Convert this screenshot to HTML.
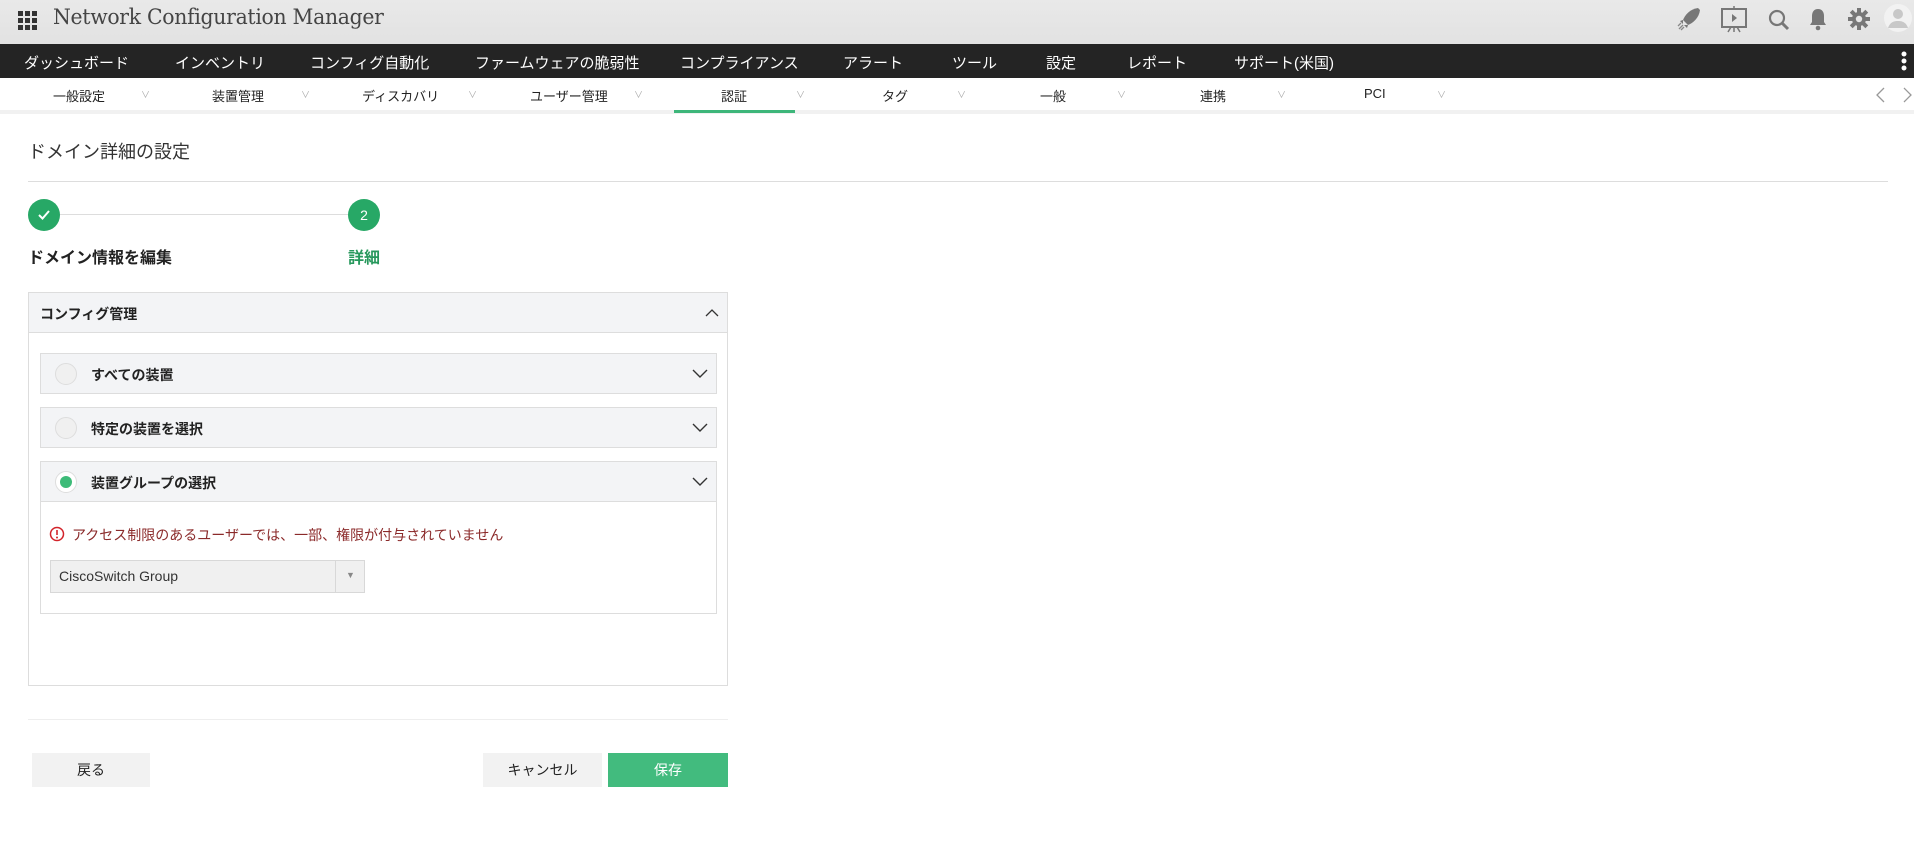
<!DOCTYPE html>
<html><head><meta charset="utf-8"><style>
*{margin:0;padding:0;box-sizing:border-box}
body{width:1914px;height:852px;overflow:hidden;background:#fff;font-family:"Liberation Sans","Noto Sans CJK JP",sans-serif;color:#222;position:relative}
.abs{position:absolute}
#top{left:0;top:0;width:1914px;height:44px;background:linear-gradient(#e9e9e9,#e2e2e2)}
#nav{left:0;top:44px;width:1914px;height:34px;background:#242424;color:#fff;font-size:15px}
#nav span{position:absolute;top:8px;white-space:nowrap}
#sub{left:0;top:78px;width:1914px;height:36px;background:#fff;border-bottom:4px solid #f1f1f1;font-size:13px}
#sub span{position:absolute;top:8px;white-space:nowrap}
#sub i{position:absolute;top:10px;font-style:normal;color:#aaa;font-size:9px}
.circ{width:32px;height:32px;border-radius:50%;background:#27a866;color:#fff;text-align:center;line-height:32px;font-size:14px}
.item{left:40px;width:677px;height:41px;background:#f3f4f6;border:1px solid #ddd;font-size:14px;font-weight:bold}
.item .r{position:absolute;left:14px;top:9px;width:22px;height:22px;border-radius:50%;border:1px solid #ddd;background:#f0f0f0}
.item .t{position:absolute;left:50px;top:11px}
.item svg{position:absolute;right:8px;top:15px}
.btn{top:753px;height:34px;text-align:center;line-height:34px;font-size:14px}
</style></head><body>
<div id="top" class="abs">
<svg class="abs" style="left:18px;top:11px" width="19" height="19"><g fill="#333"><rect x="0" y="0" width="5" height="5"/><rect x="7" y="0" width="5" height="5"/><rect x="14" y="0" width="5" height="5"/><rect x="0" y="7" width="5" height="5"/><rect x="7" y="7" width="5" height="5"/><rect x="14" y="7" width="5" height="5"/><rect x="0" y="14" width="5" height="5"/><rect x="7" y="14" width="5" height="5"/><rect x="14" y="14" width="5" height="5"/></g></svg>
<div class="abs" style="left:53px;top:5px;font-family:'DejaVu Serif','Liberation Serif',serif;font-size:21px;color:#444;letter-spacing:-0.3px;transform:scaleX(0.97);transform-origin:left">Network Configuration Manager</div>
<svg class="abs" style="left:1676px;top:6px" width="26" height="26" viewBox="0 0 26 26"><path d="M22 2 C14 3 9 9 7 14 L12 19 C17 17 23 12 24 4Z" fill="#777"/><path d="M7 14l-3 1 3 3M12 19l-1 3-3-3" fill="#777"/><path d="M3 23l4-4M5 24l3-3M2 20l3-3" stroke="#888" stroke-width="1.3"/></svg>
<svg class="abs" style="left:1720px;top:6px" width="28" height="28" viewBox="0 0 28 28"><rect x="2" y="3" width="24" height="18" fill="none" stroke="#777" stroke-width="2"/><path d="M14 0v3M11 21l-3 5M17 21l3 5M14 21v5" stroke="#777" stroke-width="1.5"/><path d="M12 8l5 4-5 4z" fill="#777"/></svg>
<svg class="abs" style="left:1767px;top:8px" width="24" height="24" viewBox="0 0 24 24"><circle cx="10" cy="10" r="7" fill="none" stroke="#777" stroke-width="2.2"/><path d="M15 15l6 6" stroke="#777" stroke-width="3"/></svg>
<svg class="abs" style="left:1808px;top:7px" width="20" height="24" viewBox="0 0 20 24"><path d="M10 2c-4 0-6 3-6 7v6l-2 3h16l-2-3V9c0-4-2-7-6-7z" fill="#777"/><circle cx="10" cy="21" r="2.3" fill="#777"/></svg>
<svg class="abs" style="left:1847px;top:7px" width="24" height="24" viewBox="0 0 24 24"><g stroke="#777" stroke-width="4"><path d="M12 1v22M1 12h22M4.2 4.2l15.6 15.6M19.8 4.2L4.2 19.8"/></g><circle cx="12" cy="12" r="7" fill="#777"/><circle cx="12" cy="12" r="3.2" fill="#e6e6e6"/></svg>
<svg class="abs" style="left:1883px;top:3px" width="31" height="31" viewBox="0 0 31 31"><circle cx="15" cy="15" r="14" fill="#f2f2f2"/><circle cx="15" cy="11" r="5" fill="#c8c8c8"/><path d="M5 25c2-6 6-7 10-7s8 1 10 7z" fill="#c8c8c8"/></svg>
</div>
<div id="nav" class="abs">
<span style="left:24px">ダッシュボード</span><span style="left:175px">インベントリ</span><span style="left:310px">コンフィグ自動化</span><span style="left:475px">ファームウェアの脆弱性</span><span style="left:680px">コンプライアンス</span><span style="left:843px">アラート</span><span style="left:952px">ツール</span><span style="left:1046px">設定</span><span style="left:1127px">レポート</span><span style="left:1234px">サポート(米国)</span>
<svg class="abs" style="left:1900px;top:7px" width="8" height="22"><circle cx="4" cy="3" r="2.5" fill="#fff"/><circle cx="4" cy="10" r="2.5" fill="#fff"/><circle cx="4" cy="17" r="2.5" fill="#fff"/></svg>
</div>
<div id="sub" class="abs">
<span style="left:53px">一般設定</span><i style="left:141px">∨</i>
<span style="left:212px">装置管理</span><i style="left:301px">∨</i>
<span style="left:362px">ディスカバリ</span><i style="left:468px">∨</i>
<span style="left:530px">ユーザー管理</span><i style="left:634px">∨</i>
<span style="left:721px">認証</span><i style="left:796px">∨</i>
<span style="left:882px">タグ</span><i style="left:957px">∨</i>
<span style="left:1040px">一般</span><i style="left:1117px">∨</i>
<span style="left:1200px">連携</span><i style="left:1277px">∨</i>
<span style="left:1364px">PCI</span><i style="left:1437px">∨</i>
<div class="abs" style="left:674px;top:32px;width:121px;height:3px;background:#3db67a"></div>
<svg class="abs" style="left:1874px;top:8px" width="40" height="18"><path d="M10 2L3 9l7 7M30 2l7 7-7 7" fill="none" stroke="#999" stroke-width="1.3"/></svg>
</div>
<div class="abs" style="left:28px;top:138px;font-size:18px;color:#333">ドメイン詳細の設定</div>
<div class="abs" style="left:28px;top:181px;width:1860px;height:1px;background:#ddd"></div>
<div class="abs" style="left:60px;top:214px;width:288px;height:1px;background:#ddd"></div>
<div class="abs circ" style="left:28px;top:199px"><svg width="14" height="12" viewBox="0 0 14 12" style="margin-top:10px"><path d="M2 6l3.5 3.5L12 2" fill="none" stroke="#fff" stroke-width="2"/></svg></div>
<div class="abs circ" style="left:348px;top:199px">2</div>
<div class="abs" style="left:28px;top:244px;font-size:16px;font-weight:bold;color:#222">ドメイン情報を編集</div>
<div class="abs" style="left:348px;top:244px;font-size:16px;font-weight:bold;color:#27985c">詳細</div>
<div class="abs" style="left:28px;top:292px;width:700px;height:394px;border:1px solid #ddd"></div>
<div class="abs" style="left:28px;top:292px;width:700px;height:41px;background:#f3f4f6;border:1px solid #ddd;font-size:14px;font-weight:bold"><span class="abs" style="left:11px;top:11px">コンフィグ管理</span><svg class="abs" style="right:8px;top:15px" width="14" height="10"><path d="M1 8l6-6 6 6" fill="none" stroke="#333" stroke-width="1.3"/></svg></div>
<div class="abs item" style="top:353px"><div class="r"></div><div class="t">すべての装置</div><svg width="16" height="10"><path d="M1 1l7 7 7-7" fill="none" stroke="#333" stroke-width="1.4"/></svg></div>
<div class="abs item" style="top:407px"><div class="r"></div><div class="t">特定の装置を選択</div><svg width="16" height="10"><path d="M1 1l7 7 7-7" fill="none" stroke="#333" stroke-width="1.4"/></svg></div>
<div class="abs" style="left:40px;top:461px;width:677px;height:153px;border:1px solid #ddd"></div>
<div class="abs item" style="top:461px"><div class="r" style="background:#fff"><div style="width:12px;height:12px;border-radius:50%;background:#3dbb78;margin:4px"></div></div><div class="t">装置グループの選択</div><svg width="16" height="10"><path d="M1 1l7 7 7-7" fill="none" stroke="#333" stroke-width="1.4"/></svg></div>
<svg class="abs" style="left:49px;top:526px" width="16" height="16"><circle cx="8" cy="8" r="6.5" fill="none" stroke="#d2232a" stroke-width="1.5"/><path d="M8 4v5" stroke="#d2232a" stroke-width="1.6"/><circle cx="8" cy="11.5" r="1" fill="#d2232a"/></svg>
<div class="abs" style="left:72px;top:525px;font-size:14px;color:#8b2a2a">アクセス制限のあるユーザーでは、一部、権限が付与されていません</div>
<div class="abs" style="left:50px;top:560px;width:315px;height:33px;background:#f0f0f0;border:1px solid #d8d8d8;font-size:14px;color:#333"><span class="abs" style="left:8px;top:7px">CiscoSwitch Group</span><div class="abs" style="left:284px;top:0;width:1px;height:31px;background:#d8d8d8"></div><span class="abs" style="left:295px;top:9px;font-size:9px;color:#888">▼</span></div>
<div class="abs" style="left:28px;top:719px;width:700px;height:1px;background:#eee"></div>
<div class="abs btn" style="left:32px;width:118px;background:#f2f2f2">戻る</div>
<div class="abs btn" style="left:483px;width:119px;background:#f2f2f2">キャンセル</div>
<div class="abs btn" style="left:608px;width:120px;background:#42bb7e;color:#fff">保存</div>
</body></html>
